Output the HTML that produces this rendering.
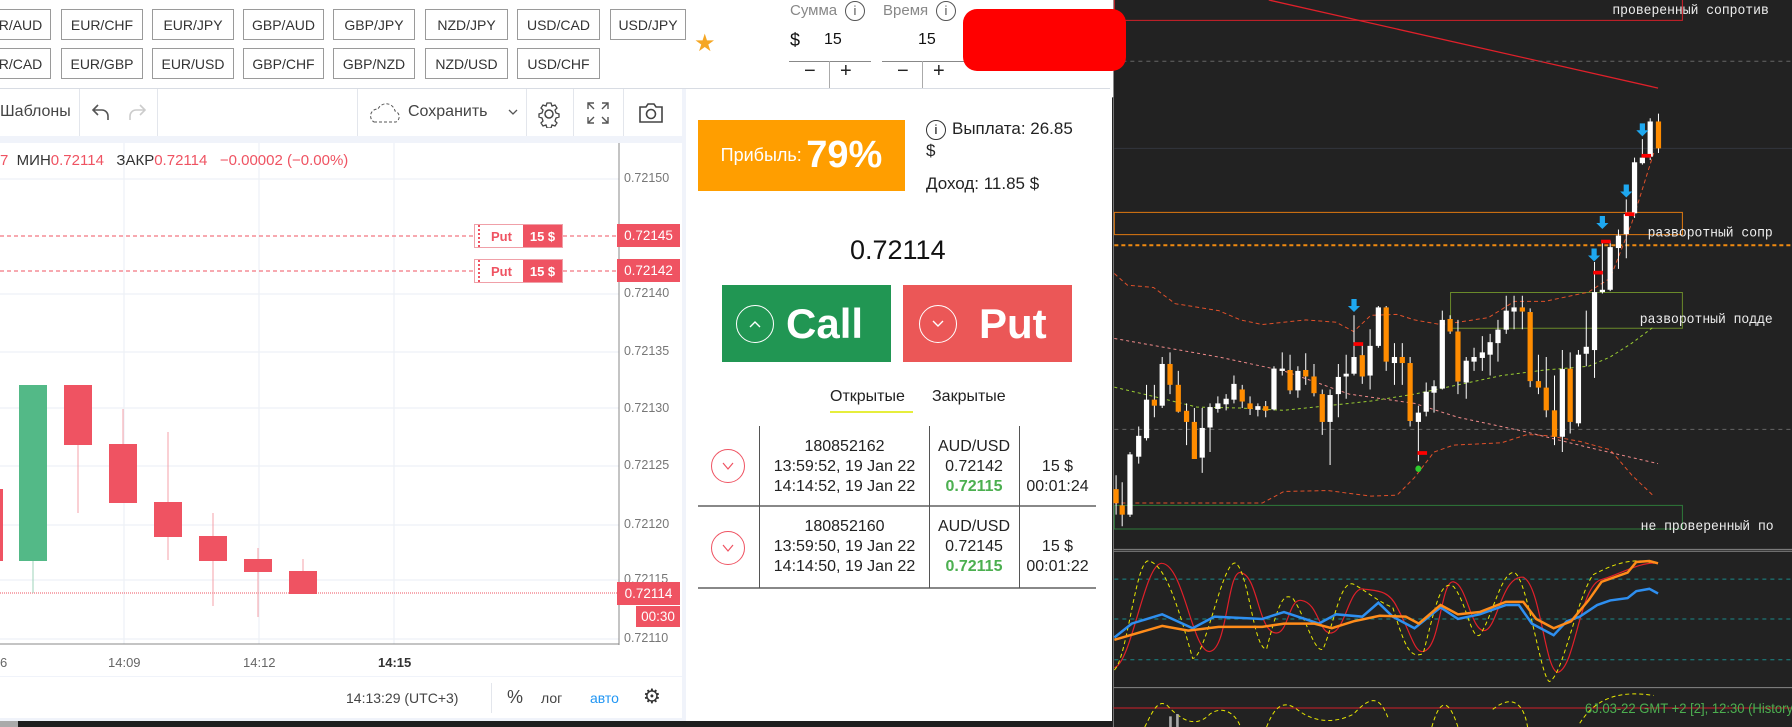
<!DOCTYPE html>
<html><head><meta charset="utf-8"><style>
*{margin:0;padding:0;box-sizing:border-box}
body{width:1792px;height:727px;overflow:hidden;background:#222;font-family:"Liberation Sans","DejaVu Sans",sans-serif;position:relative}
.a{position:absolute}
.btn{position:absolute;height:31px;border:1px solid #9a9a9a;background:#fff;font-size:14px;color:#333;display:flex;align-items:center;justify-content:center}
.tb{color:#444;font-size:16px}
.pr{position:absolute;left:624px;font-size:12.5px;color:#777}
.tag{position:absolute;left:617px;width:63px;height:23px;background:#ef5362;color:#fff;font-size:13.5px;display:flex;align-items:center;justify-content:center}
.cell{position:absolute;font-size:16px;color:#222;text-align:center;line-height:20px}
.circ{position:absolute;border-radius:50%;display:flex;align-items:center;justify-content:center}
</style></head><body>
<div class="a" style="left:0;top:0;width:1112px;height:721px;background:#fff"></div>
<div class="a" style="left:0;top:88px;width:1112px;height:633px;background:#f0f3fa"></div>
<div class="a" style="left:0;top:88px;width:1112px;height:1px;background:#d8dce3"></div>
<div class="btn" style="left:-10px;top:9px;width:61px">R/AUD</div>
<div class="btn" style="left:61px;top:9px;width:82px">EUR/CHF</div>
<div class="btn" style="left:152px;top:9px;width:82px">EUR/JPY</div>
<div class="btn" style="left:243px;top:9px;width:81px">GBP/AUD</div>
<div class="btn" style="left:333px;top:9px;width:82px">GBP/JPY</div>
<div class="btn" style="left:425px;top:9px;width:83px">NZD/JPY</div>
<div class="btn" style="left:517px;top:9px;width:83px">USD/CAD</div>
<div class="btn" style="left:610px;top:9px;width:76px">USD/JPY</div>
<div class="btn" style="left:-10px;top:48px;width:61px">R/CAD</div>
<div class="btn" style="left:61px;top:48px;width:82px">EUR/GBP</div>
<div class="btn" style="left:152px;top:48px;width:82px">EUR/USD</div>
<div class="btn" style="left:243px;top:48px;width:81px">GBP/CHF</div>
<div class="btn" style="left:333px;top:48px;width:82px">GBP/NZD</div>
<div class="btn" style="left:425px;top:48px;width:83px">NZD/USD</div>
<div class="btn" style="left:517px;top:48px;width:83px">USD/CHF</div>
<div class="a" style="left:694px;top:29px;font-size:24px;color:#f5a623">★</div>
<div class="a" style="left:790px;top:2px;font-size:15px;color:#888">Сумма</div>
<div class="a" style="left:845px;top:1px;width:20px;height:20px;border:1.5px solid #555;border-radius:50%;font-size:13px;color:#555;text-align:center;line-height:17px">i</div>
<div class="a" style="left:883px;top:2px;font-size:15px;color:#888">Время</div>
<div class="a" style="left:936px;top:1px;width:20px;height:20px;border:1.5px solid #555;border-radius:50%;font-size:13px;color:#555;text-align:center;line-height:17px">i</div>
<div class="a" style="left:790px;top:30px;font-size:18px;color:#111">$</div>
<div class="a" style="left:824px;top:31px;font-size:16px;color:#111">15</div>
<div class="a" style="left:918px;top:31px;font-size:16px;color:#111">15</div>
<div class="a" style="left:789px;top:61px;width:82px;height:1px;background:#888"></div>
<div class="a" style="left:882px;top:61px;width:82px;height:1px;background:#888"></div>
<div class="a" style="left:829px;top:61px;width:1px;height:27px;background:#aaa"></div>
<div class="a" style="left:922px;top:61px;width:1px;height:27px;background:#aaa"></div>
<div class="a" style="left:804px;top:60px;font-size:20px;color:#222">−</div>
<div class="a" style="left:840px;top:60px;font-size:20px;color:#222">+</div>
<div class="a" style="left:897px;top:60px;font-size:20px;color:#222">−</div>
<div class="a" style="left:933px;top:60px;font-size:20px;color:#222">+</div>
<div class="a" style="left:0;top:89px;width:682px;height:47px;background:#fff"></div>
<div class="a" style="left:79px;top:89px;width:1px;height:47px;background:#e3e6ec"></div>
<div class="a" style="left:157px;top:89px;width:1px;height:47px;background:#e3e6ec"></div>
<div class="a" style="left:357px;top:89px;width:1px;height:47px;background:#e3e6ec"></div>
<div class="a" style="left:526px;top:89px;width:1px;height:47px;background:#e3e6ec"></div>
<div class="a" style="left:573px;top:89px;width:1px;height:47px;background:#e3e6ec"></div>
<div class="a" style="left:623px;top:89px;width:1px;height:47px;background:#e3e6ec"></div>
<div class="a tb" style="left:0;top:103px">Шаблоны</div>
<svg class="a" style="left:91px;top:102px" width="20" height="20" fill="none" stroke="#555" stroke-width="1.6"><path d="M7 3L2 8l5 5M2 8h9a6 6 0 0 1 6 6v4"/></svg>
<svg class="a" style="left:127px;top:102px" width="20" height="20" fill="none" stroke="#ccc" stroke-width="1.6"><path d="M13 3l5 5-5 5M18 8H9a6 6 0 0 0-6 6v4"/></svg>
<svg class="a" style="left:368px;top:100px" width="34" height="26"><path d="M6 22 H28 A6 6 0 0 0 27 11 A9 9 0 0 0 10 9 A7 7 0 0 0 6 22Z" fill="none" stroke="#555" stroke-dasharray="3 2"/></svg>
<div class="a tb" style="left:408px;top:103px">Сохранить</div>
<svg class="a" style="left:508px;top:108px" width="10" height="8" fill="none" stroke="#555" stroke-width="1.3"><path d="M1 2l4 4 4-4"/></svg>
<svg class="a" style="left:535px;top:100px" width="28" height="28" viewBox="0 0 28 28"><circle cx="14" cy="14" r="4" fill="none" stroke="#444" stroke-width="1.5"/><path d="M12 3h4l1 3 3-1 2 3-2 2 1 3 3 1v3l-3 1-1 3 2 2-2 3-3-1-1 3h-4l-1-3-3 1-2-3 2-2-1-3-3-1v-3l3-1 1-3-2-2 2-3 3 1z" fill="none" stroke="#444" stroke-width="1.3"/></svg>
<svg class="a" style="left:586px;top:101px" width="24" height="24" fill="none" stroke="#555" stroke-width="1.4"><path d="M2 8V2h6M16 2h6v6M22 16v6h-6M8 22H2v-6M2 2l6 6M22 2l-6 6M22 22l-6-6M2 22l6-6"/></svg>
<svg class="a" style="left:638px;top:101px" width="26" height="24" fill="none" stroke="#444" stroke-width="1.6"><path d="M2 6h6l2-3h6l2 3h6v15H2z"/><circle cx="13" cy="13" r="4.5"/></svg>
<div class="a" style="left:0;top:143px;width:682px;height:533px;background:#fff"></div>
<div class="a" style="left:0;top:677px;width:682px;height:41px;background:#fff"></div>
<svg class="a" style="left:0;top:143px" width="682" height="533">
<g stroke="#edf1f6" stroke-width="1.2">
<line x1="0" y1="36" x2="619" y2="36"/><line x1="0" y1="151" x2="619" y2="151"/><line x1="0" y1="209" x2="619" y2="209"/><line x1="0" y1="265" x2="619" y2="265"/><line x1="0" y1="323" x2="619" y2="323"/><line x1="0" y1="382" x2="619" y2="382"/><line x1="0" y1="437" x2="619" y2="437"/><line x1="0" y1="496" x2="619" y2="496"/>
<line x1="124" y1="0" x2="124" y2="501"/><line x1="259" y1="0" x2="259" y2="501"/><line x1="394" y1="0" x2="394" y2="501"/>
</g>
<line x1="619" y1="0" x2="619" y2="502" stroke="#888"/>
<line x1="0" y1="501" x2="619" y2="501" stroke="#888"/>
<g stroke="#ef5362" stroke-dasharray="4 3"><line x1="0" y1="93" x2="474" y2="93"/><line x1="563" y1="93" x2="619" y2="93"/><line x1="0" y1="128" x2="474" y2="128"/><line x1="563" y1="128" x2="619" y2="128"/></g>
<line x1="0" y1="450" x2="619" y2="450" stroke="#ef5362" stroke-dasharray="1 1"/>
<g stroke="#f5a0a8"><line x1="78" y1="242" x2="78" y2="370"/><line x1="123" y1="266" x2="123" y2="301"/><line x1="168" y1="289" x2="168" y2="417"/><line x1="213" y1="370" x2="213" y2="463"/><line x1="258" y1="405" x2="258" y2="474"/><line x1="303" y1="416" x2="303" y2="451"/></g>
<line x1="33" y1="418" x2="33" y2="450" stroke="#9ed3b8"/>
<rect x="19" y="242" width="28" height="176" fill="#53b987"/>
<g fill="#ef5362"><rect x="-3" y="346" width="6" height="72"/><rect x="64" y="242" width="28" height="60"/><rect x="109" y="301" width="28" height="59"/><rect x="154" y="359" width="28" height="35"/><rect x="199" y="393" width="28" height="25"/><rect x="244" y="416" width="28" height="13"/><rect x="289" y="428" width="28" height="23"/></g>
</svg>
<div class="a" style="left:0;top:152px;font-size:15px;color:#333;white-space:nowrap"><span style="color:#ef5362">7</span>&nbsp; МИН<span style="color:#ef5362">0.72114</span>&nbsp;&nbsp; ЗАКР<span style="color:#ef5362">0.72114</span>&nbsp;&nbsp; <span style="color:#ef5362">−0.00002 (−0.00%)</span></div>
<div class="pr" style="top:171px">0.72150</div>
<div class="pr" style="top:286px">0.72140</div>
<div class="pr" style="top:344px">0.72135</div>
<div class="pr" style="top:401px">0.72130</div>
<div class="pr" style="top:458px">0.72125</div>
<div class="pr" style="top:517px">0.72120</div>
<div class="pr" style="top:572px">0.72115</div>
<div class="pr" style="top:631px">0.72110</div>
<div class="a" style="left:474px;top:224px;width:89px;height:24px;border:1px solid #f0a0a8;background:#fff;display:flex"><div style="width:45px;font-size:13px;color:#ef5362;font-weight:bold;display:flex;align-items:center;justify-content:center;border-left:2px dotted #ef5362;margin-left:3px">Put</div><div style="flex:1;background:#ef5362;color:#fff;font-size:13px;font-weight:bold;display:flex;align-items:center;justify-content:center">15 $</div></div>
<div class="a" style="left:474px;top:259px;width:89px;height:24px;border:1px solid #f0a0a8;background:#fff;display:flex"><div style="width:45px;font-size:13px;color:#ef5362;font-weight:bold;display:flex;align-items:center;justify-content:center;border-left:2px dotted #ef5362;margin-left:3px">Put</div><div style="flex:1;background:#ef5362;color:#fff;font-size:13px;font-weight:bold;display:flex;align-items:center;justify-content:center">15 $</div></div>
<div class="tag" style="top:224px">0.72145</div>
<div class="tag" style="top:259px">0.72142</div>
<div class="tag" style="top:582px">0.72114</div>
<div class="tag" style="top:606px;left:636px;width:44px;height:21px">00:30</div>
<div class="a" style="left:0;top:655px;font-size:13px;color:#666">6</div>
<div class="a" style="left:108px;top:655px;font-size:13px;color:#666">14:09</div>
<div class="a" style="left:243px;top:655px;font-size:13px;color:#666">14:12</div>
<div class="a" style="left:378px;top:655px;font-size:13px;color:#333;font-weight:bold">14:15</div>
<div class="a" style="left:346px;top:690px;font-size:14px;color:#444">14:13:29 (UTC+3)</div>
<div class="a" style="left:491px;top:683px;width:1px;height:30px;background:#e3e6ec"></div>
<div class="a" style="left:507px;top:687px;font-size:18px;color:#444">%</div>
<div class="a" style="left:541px;top:690px;font-size:14px;color:#444">лог</div>
<div class="a" style="left:590px;top:690px;font-size:14px;color:#2196f3">авто</div>
<div class="a" style="left:643px;top:684px;font-size:20px;color:#333">⚙</div>
<div class="a" style="left:686px;top:89px;width:426px;height:632px;background:#fff"></div>
<div class="a" style="left:698px;top:120px;width:207px;height:71px;background:#ff9e00;color:#fff;display:flex;align-items:center;justify-content:center"><span style="font-size:18px">Прибыль:</span>&nbsp;<b style="font-size:38px">79%</b></div>
<div class="a" style="left:926px;top:120px;width:20px;height:20px;border:1.5px solid #333;border-radius:50%;font-size:13px;text-align:center;line-height:17px">i</div>
<div class="a" style="left:952px;top:119px;font-size:17px;color:#222">Выплата: 26.85</div>
<div class="a" style="left:926px;top:141px;font-size:17px;color:#222">$</div>
<div class="a" style="left:926px;top:174px;font-size:17px;color:#222">Доход: 11.85 $</div>
<div class="a" style="left:850px;top:235px;font-size:27px;color:#111">0.72114</div>
<div class="a" style="left:722px;top:285px;width:169px;height:77px;background:#219653;color:#fff;display:flex;align-items:center"><div class="circ" style="position:relative;flex-shrink:0;width:38px;height:38px;border:1.5px solid #fff;margin:0 12px 0 14px"><svg width="14" height="10" fill="none" stroke="#fff" stroke-width="1.4"><path d="M2 8l5-5 5 5"/></svg></div><b style="font-size:42px">Call</b></div>
<div class="a" style="left:903px;top:285px;width:169px;height:77px;background:#eb5757;color:#fff;display:flex;align-items:center"><div class="circ" style="position:relative;flex-shrink:0;width:38px;height:38px;border:1.5px solid #fff;margin:0 22px 0 16px"><svg width="14" height="10" fill="none" stroke="#fff" stroke-width="1.4"><path d="M2 2l5 5 5-5"/></svg></div><b style="font-size:42px">Put</b></div>
<div class="a" style="left:830px;top:388px;font-size:16px;color:#222">Открытые</div>
<div class="a" style="left:830px;top:411px;width:83px;height:2px;background:#e6ee3c"></div>
<div class="a" style="left:932px;top:388px;font-size:16px;color:#222">Закрытые</div>
<div class="a" style="left:698px;top:505px;width:398px;height:1.5px;background:#888"></div>
<div class="a" style="left:698px;top:587px;width:398px;height:1.5px;background:#888"></div>
<div class="a" style="left:759px;top:426px;width:1px;height:162px;background:#555"></div>
<div class="a" style="left:929px;top:426px;width:1px;height:162px;background:#555"></div>
<div class="a" style="left:1019px;top:426px;width:1px;height:162px;background:#555"></div>
<div class="circ" style="left:711px;top:449px;width:34px;height:34px;border:1px solid #ef5362"><svg width="14" height="10" fill="none" stroke="#ef5362" stroke-width="1.2"><path d="M2 2l5 6 5-6"/></svg></div>
<div class="circ" style="left:711px;top:531px;width:34px;height:34px;border:1px solid #ef5362"><svg width="14" height="10" fill="none" stroke="#ef5362" stroke-width="1.2"><path d="M2 2l5 6 5-6"/></svg></div>
<div class="cell" style="left:760px;top:437px;width:169px">180852162<br>13:59:52, 19 Jan 22<br>14:14:52, 19 Jan 22</div>
<div class="cell" style="left:929px;top:437px;width:90px">AUD/USD<br>0.72142<br><b style="color:#4caf50">0.72115</b></div>
<div class="cell" style="left:1019px;top:457px;width:77px">15 $<br>00:01:24</div>
<div class="cell" style="left:760px;top:517px;width:169px">180852160<br>13:59:50, 19 Jan 22<br>14:14:50, 19 Jan 22</div>
<div class="cell" style="left:929px;top:517px;width:90px">AUD/USD<br>0.72145<br><b style="color:#4caf50">0.72115</b></div>
<div class="cell" style="left:1019px;top:537px;width:77px">15 $<br>00:01:22</div>
<svg class="a" style="left:1110px;top:0" width="682" height="727" viewBox="0 0 1568 1568" preserveAspectRatio="none">
<rect x="6" y="0" width="1562" height="1568" fill="#222"/>
<rect x="0" y="0" width="8" height="210" fill="#fff"/>
<line x1="8" y1="210" x2="8" y2="1568" stroke="#777" vector-effect="non-scaling-stroke"/>
<g fill="none">
<rect x="10" y="-5" width="1306" height="49" stroke="#d0202a" vector-effect="non-scaling-stroke"/>
<line x1="365" y1="0" x2="1260" y2="190" stroke="#e0202a" stroke-width="1.3" vector-effect="non-scaling-stroke"/>
<line x1="10" y1="132" x2="1568" y2="132" stroke="#666" stroke-dasharray="4 4" vector-effect="non-scaling-stroke"/>
<line x1="10" y1="320" x2="1568" y2="320" stroke="#33363e" vector-effect="non-scaling-stroke"/>
<rect x="10" y="458" width="1306" height="48" stroke="#e07a10" vector-effect="non-scaling-stroke"/>
<line x1="10" y1="529" x2="1568" y2="529" stroke="#f08a10" stroke-width="2" stroke-dasharray="4 3" vector-effect="non-scaling-stroke"/>
<rect x="783" y="631" width="533" height="77" stroke="#6a8a2a" vector-effect="non-scaling-stroke"/>
<line x1="10" y1="926" x2="1568" y2="926" stroke="#666" stroke-dasharray="4 4" vector-effect="non-scaling-stroke"/>
<rect x="10" y="1090" width="1306" height="51" stroke="#2e7a3a" vector-effect="non-scaling-stroke"/>
<polyline points="10,590 40,615 100,620 150,655 250,670 300,690 350,700 450,690 520,695 560,715 600,680 660,678 700,690 760,700 800,695 870,685 930,650 1000,650 1050,640 1100,630 1150,600 1200,480 1250,330" stroke="#e0502a" stroke-dasharray="4 3" vector-effect="non-scaling-stroke"/>
<polyline points="10,1085 150,1085 350,1085 400,1060 500,1058 600,1070 660,1068 700,1030 745,975 790,960 900,955 960,937 1010,940 1080,952 1150,970 1200,1025 1250,1070" stroke="#e0502a" stroke-dasharray="4 3" vector-effect="non-scaling-stroke"/>
<polyline points="10,730 100,745 250,770 400,800 550,850 700,870 800,900 950,930 1100,965 1260,1000" stroke="#f08a8a" stroke-dasharray="3 3" vector-effect="non-scaling-stroke"/>
<polyline points="10,835 100,855 200,878 300,880 400,885 500,875 600,865 700,850 800,830 900,810 1000,798 1100,790 1150,770 1200,740 1250,705" stroke="#9acd32" stroke-dasharray="3 3" vector-effect="non-scaling-stroke"/>
</g>
<path stroke="#fff" vector-effect="non-scaling-stroke" d="M14 1025V1110M28 1040V1135M46 975V1115M66 920V1000M84 830V950M102 830V900M120 770V880M138 760V850M157 800V890M176 870V960M194 880V990M212 880V1020M230 870V975M248 855V890M267 850V885M285 810V870M304 830V880M322 855V895M340 870V898M358 865V900M377 790V885M396 760V810M414 765V850M432 790V858M450 762V830M469 785V855M488 840V938M506 840V1003M525 785V900M543 765V860M561 680V810M580 740V828M598 710V840M617 660V750M635 660V800M654 740V830M672 740V830M690 770V920M709 875V995M727 825V898M745 820V890M764 670V840M782 680V720M800 690V850M819 770V860M837 750V800M856 725V800M874 720V810M892 690V780M911 638V720M929 638V710M948 638V710M966 665V835M985 765V850M1003 770V900M1022 810V960M1040 755V975M1058 760V935M1077 755V920M1095 670V790M1114 565V815M1132 520V633M1150 520V628M1169 495V580M1187 430V557M1206 340V470M1224 300V355M1242 255V345M1261 245V330"/>
<g fill="#ff8c00">
<rect x="8" y="1055" width="12" height="30"/><rect x="22" y="1090" width="12" height="20"/><rect x="96" y="862" width="12" height="13"/><rect x="132" y="785" width="12" height="45"/><rect x="151" y="830" width="12" height="58"/><rect x="170" y="886" width="12" height="24"/><rect x="188" y="910" width="12" height="80"/><rect x="298" y="840" width="12" height="26"/><rect x="316" y="870" width="12" height="12"/><rect x="352" y="876" width="12" height="10"/><rect x="408" y="798" width="12" height="44"/><rect x="444" y="798" width="12" height="14"/><rect x="463" y="812" width="12" height="36"/><rect x="482" y="850" width="12" height="60"/><rect x="574" y="766" width="12" height="46"/><rect x="629" y="663" width="12" height="117"/><rect x="666" y="770" width="12" height="13"/><rect x="684" y="783" width="12" height="125"/><rect x="776" y="688" width="12" height="27"/><rect x="794" y="715" width="12" height="108"/><rect x="942" y="663" width="12" height="9"/><rect x="960" y="673" width="12" height="149"/><rect x="979" y="822" width="12" height="14"/><rect x="997" y="836" width="12" height="49"/><rect x="1016" y="885" width="12" height="57"/><rect x="1052" y="795" width="12" height="115"/><rect x="1255" y="262" width="12" height="58"/>
</g>
<g fill="#fff">
<rect x="40" y="980" width="12" height="130"/><rect x="60" y="940" width="12" height="45"/><rect x="78" y="862" width="12" height="83"/><rect x="114" y="785" width="12" height="90"/><rect x="206" y="923" width="12" height="64"/><rect x="224" y="878" width="12" height="44"/><rect x="242" y="870" width="12" height="12"/><rect x="261" y="860" width="12" height="12"/><rect x="279" y="828" width="12" height="34"/><rect x="334" y="876" width="12" height="8"/><rect x="371" y="795" width="12" height="88"/><rect x="390" y="795" width="12" height="5"/><rect x="426" y="800" width="12" height="42"/><rect x="500" y="852" width="12" height="58"/><rect x="519" y="813" width="12" height="37"/><rect x="537" y="806" width="12" height="6"/><rect x="555" y="770" width="12" height="36"/><rect x="592" y="746" width="12" height="64"/><rect x="611" y="663" width="12" height="83"/><rect x="648" y="770" width="12" height="13"/><rect x="703" y="890" width="12" height="20"/><rect x="721" y="845" width="12" height="43"/><rect x="739" y="833" width="12" height="14"/><rect x="758" y="690" width="12" height="148"/><rect x="813" y="778" width="12" height="47"/><rect x="831" y="770" width="12" height="10"/><rect x="850" y="760" width="12" height="12"/><rect x="868" y="738" width="12" height="27"/><rect x="886" y="711" width="12" height="29"/><rect x="905" y="670" width="12" height="41"/><rect x="923" y="663" width="12" height="9"/><rect x="1034" y="796" width="12" height="146"/><rect x="1071" y="765" width="12" height="148"/><rect x="1089" y="748" width="12" height="15"/><rect x="1108" y="630" width="12" height="125"/><rect x="1126" y="625" width="12" height="5"/><rect x="1144" y="533" width="12" height="92"/><rect x="1163" y="508" width="12" height="27"/><rect x="1181" y="462" width="12" height="43"/><rect x="1200" y="350" width="12" height="110"/><rect x="1218" y="340" width="12" height="12"/><rect x="1236" y="262" width="12" height="76"/>
</g>
<g fill="#f00"><rect x="560" y="738" width="22" height="8"/><rect x="707" y="973" width="22" height="8"/><rect x="1111" y="584" width="22" height="8"/><rect x="1129" y="517" width="22" height="8"/><rect x="1184" y="458" width="22" height="8"/><rect x="1222" y="332" width="22" height="8"/></g>
<circle cx="709" cy="1011" r="7" fill="#2ecc2e"/>
<g fill="#1ea8f0"><path d="M555 645h12v15h8l-14 13-14-13h8z"/><path d="M1107 536h12v15h8l-14 13-14-13h8z"/><path d="M1126 466h12v15h8l-14 13-14-13h8z"/><path d="M1181 398h12v15h8l-14 13-14-13h8z"/><path d="M1218 266h12v15h8l-14 13-14-13h8z"/></g>
<text x="1155" y="30" fill="#eee" font-family="Liberation Mono,monospace" font-size="30">проверенный сопротив</text>
<text x="1236" y="510" fill="#eee" font-family="Liberation Mono,monospace" font-size="30">разворотный сопр</text>
<text x="1218" y="697" fill="#eee" font-family="Liberation Mono,monospace" font-size="30">разворотный подде</text>
<text x="1220" y="1143" fill="#eee" font-family="Liberation Mono,monospace" font-size="30">не проверенный по</text>
<g fill="none">
<line x1="8" y1="1185" x2="1568" y2="1185" stroke="#888" vector-effect="non-scaling-stroke"/>
<line x1="8" y1="1189" x2="1568" y2="1189" stroke="#888" vector-effect="non-scaling-stroke"/>
<g stroke="#1a8a8a" stroke-dasharray="4 4"><line x1="10" y1="1249" x2="1568" y2="1249" vector-effect="non-scaling-stroke"/><line x1="10" y1="1335" x2="1568" y2="1335" vector-effect="non-scaling-stroke"/><line x1="10" y1="1423" x2="1568" y2="1423" vector-effect="non-scaling-stroke"/></g>
<path d="M10 1440 C50 1430 80 1210 120 1215 C170 1220 190 1410 230 1405 C270 1400 270 1230 300 1235 C340 1240 340 1360 380 1365 C410 1370 410 1290 440 1295 C480 1300 480 1370 510 1365 C540 1360 550 1270 580 1270 C610 1275 640 1270 660 1310 C690 1360 700 1410 720 1405 C760 1400 760 1250 790 1255 C820 1260 830 1360 860 1360 C890 1360 900 1240 950 1245 C990 1260 1000 1450 1030 1450 C1070 1440 1080 1260 1130 1250 C1170 1240 1220 1210 1260 1215" stroke="#e0202a" stroke-width="1.2" vector-effect="non-scaling-stroke"/>
<path d="M10 1445 C40 1420 60 1200 90 1210 C130 1220 160 1320 190 1420 C220 1420 260 1200 290 1215 C320 1240 330 1400 360 1400 C390 1290 400 1280 420 1290 C450 1330 470 1410 490 1400 C520 1330 530 1250 560 1260 C590 1275 620 1300 650 1310 C680 1400 690 1420 720 1410 C750 1300 760 1250 790 1265 C820 1300 830 1380 850 1370 C880 1330 900 1230 930 1235 C960 1250 990 1460 1010 1470 C1040 1460 1070 1300 1110 1240 C1150 1220 1200 1200 1250 1215" stroke="#e8e800" stroke-dasharray="4 3" vector-effect="non-scaling-stroke"/>
<polyline points="10,1375 50,1345 120,1325 190,1355 240,1330 350,1335 400,1320 480,1345 520,1325 580,1330 617,1300 650,1330 700,1355 760,1310 800,1335 850,1325 910,1305 940,1305 970,1345 1020,1370 1050,1340 1080,1330 1120,1305 1150,1295 1190,1290 1210,1275 1240,1270 1260,1280" stroke="#2e8ff0" stroke-width="2.5" vector-effect="non-scaling-stroke"/>
<polyline points="10,1380 120,1350 180,1360 250,1352 350,1352 400,1345 470,1345 510,1355 560,1340 620,1328 680,1330 710,1345 760,1305 800,1325 850,1320 910,1298 950,1298 980,1335 1020,1355 1060,1340 1100,1295 1130,1255 1190,1235 1210,1212 1240,1210 1260,1215" stroke="#ff8c1a" stroke-width="2.5" vector-effect="non-scaling-stroke"/>
<line x1="8" y1="1483" x2="1568" y2="1483" stroke="#888" vector-effect="non-scaling-stroke"/>
<line x1="8" y1="1527" x2="1568" y2="1527" stroke="#d0202a" vector-effect="non-scaling-stroke"/>
<path d="M80 1568 C100 1530 110 1510 130 1520 C170 1560 200 1568 230 1540 C260 1520 290 1540 300 1568 M360 1568 C380 1520 400 1510 430 1530 C470 1560 520 1560 560 1540 C600 1500 620 1500 640 1550 M740 1568 C760 1500 780 1510 800 1568 M880 1530 C920 1500 950 1510 960 1568 M1080 1560 C1120 1500 1180 1490 1250 1500" stroke="#e8e800" stroke-dasharray="4 3" vector-effect="non-scaling-stroke"/>
</g>
<rect x="136" y="1545" width="6" height="23" fill="#aaa"/><rect x="152" y="1540" width="6" height="28" fill="#aaa"/>
<text x="1092" y="1538" fill="#4caf50" font-family="Liberation Sans,sans-serif" font-size="30">6J.03-22 GMT +2 [2], 12:30 (History</text>
</svg>
<div class="a" style="left:963px;top:9px;width:163px;height:62px;background:#ff0000;border-radius:14px"></div>
<div class="a" style="left:0;top:721px;width:1112px;height:6px;background:#1e1e1e"></div>
<div class="a" style="left:0;top:721px;width:18px;height:6px;background:#aaa"></div>
</body></html>
